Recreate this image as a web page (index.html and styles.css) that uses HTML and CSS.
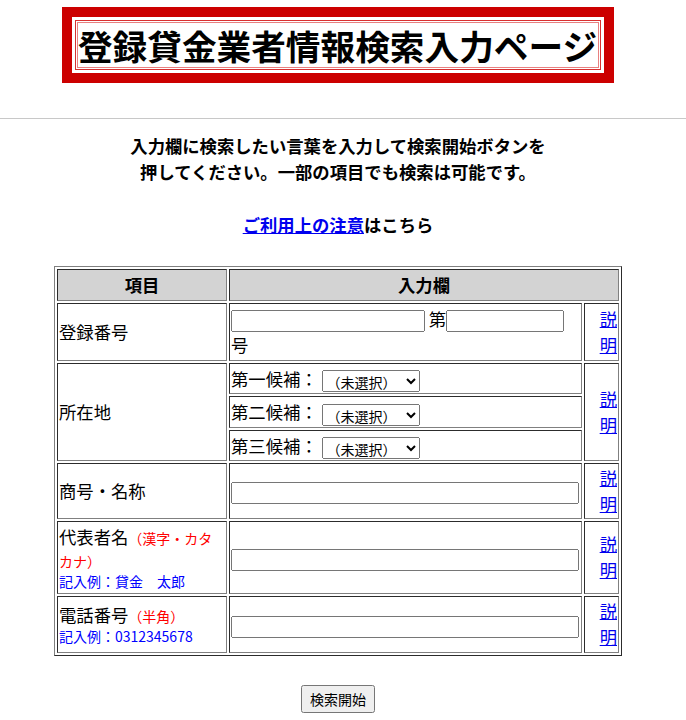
FILE: index.html
```html
<!DOCTYPE html>
<html lang="ja">
<head>
<meta charset="utf-8">
<title>登録貸金業者情報検索入力ページ</title>
<link rel="stylesheet" href="styles.css">
</head>
<body>
<div class="page">
  <div class="title-box">
    <div class="title-inner">
      <h1 class="title-text">登録貸金業者情報検索入力ページ</h1>
    </div>
  </div>
</div>
<hr class="rule">
<div class="page">
  <p class="lead">入力欄に検索したい言葉を入力して検索開始ボタンを<br>押してください。一部の項目でも検索は可能です。</p>
  <p class="notice"><a href="#" class="link">ご利用上の注意</a>はこちら</p>
  <form class="search-form">
    <table class="search-table">
      <colgroup>
        <col class="c1"><col class="c2"><col class="c3">
      </colgroup>
      <tr>
        <th class="head">項目</th>
        <th class="head" colspan="2">入力欄</th>
      </tr>
      <tr>
        <td class="label tall">登録番号</td>
        <td class="field"><input type="text" class="in-reg1"> 第<input type="text" class="in-reg2"><br>号</td>
        <td class="help"><a href="#" class="link">説明</a></td>
      </tr>
      <tr>
        <td class="label" rowspan="3">所在地</td>
        <td class="field sub">第一候補： <select class="sel"><option>（未選択）</option></select></td>
        <td class="help" rowspan="3"><a href="#" class="link">説明</a></td>
      </tr>
      <tr>
        <td class="field sub">第二候補： <select class="sel"><option>（未選択）</option></select></td>
      </tr>
      <tr>
        <td class="field sub">第三候補： <select class="sel"><option>（未選択）</option></select></td>
      </tr>
      <tr>
        <td class="label mid">商号・名称</td>
        <td class="field"><input type="text" class="in-long"></td>
        <td class="help"><a href="#" class="link">説明</a></td>
      </tr>
      <tr>
        <td class="label"><span class="name-line">代表者名<span class="red">（漢字・カタ</span><br><span class="red">カナ）</span></span><span class="eg">記入例：貸金　太郎</span></td>
        <td class="field"><input type="text" class="in-long"></td>
        <td class="help"><a href="#" class="link">説明</a></td>
      </tr>
      <tr>
        <td class="label phone"><span class="name-line">電話番号<span class="red">（半角）</span></span><span class="eg">記入例：0312345678</span></td>
        <td class="field"><input type="text" class="in-long"></td>
        <td class="help"><a href="#" class="link">説明</a></td>
      </tr>
    </table>
    <div class="actions"><button type="button" class="submit">検索開始</button></div>
  </form>
</div>
</body>
</html>
```

FILE: styles.css
```css
html, body {
  margin: 0;
  padding: 0;
  background: #fff;
}
body {
  font-family: "Noto Sans CJK JP", "Noto Sans", sans-serif;
  color: #000;
  font-size: 17.33px;
}
.page {
  width: 676px;
}
.title-box {
  width: fit-content;
  margin: 7px auto 0;
  border: 10px solid #cc0000;
  padding: 3px;
}
.title-inner {
  border: 1px solid #d83030;
  padding: 1px;
}
.title-text {
  margin: 0;
  border: 1px solid #e88080;
  font-size: 34.67px;
  font-weight: bold;
  line-height: 44px;
  padding: 0 1px 0 0;
  white-space: nowrap;
}
.rule {
  margin: 35px 0 0;
  border: 0;
  border-top: 1px solid #c8c8c8;
  height: 0;
}
.lead {
  margin: 14px 0 0;
  text-align: center;
  font-weight: bold;
  line-height: 26px;
}
.notice {
  margin: 27px 0 0;
  text-align: center;
  font-weight: bold;
  line-height: 26px;
}
.link {
  color: #0000ee;
  text-decoration: underline;
}
.search-form {
  margin: 28px 0 0;
}
.search-table {
  table-layout: fixed;
  width: 567px;
  margin: 0 auto;
  border: 1px outset #808080;
  border-spacing: 2px;
  line-height: 26px;
}
.c1 { width: 170px; }
.c2 { width: 353px; }
.c3 { width: 35px; }
.search-table th,
.search-table td {
  border: 1px inset #808080;
  padding: 1px;
}
.head {
  background: #d3d3d3;
  font-weight: bold;
  height: 28px;
  text-align: center;
}
.label {
  text-align: left;
}
.label.tall {
  height: 54px;
}
.label.mid {
  height: 51px;
}
.label.phone {
  height: 53px;
}
.help {
  text-align: right;
}
.field.sub {
  height: 27px;
  line-height: 27px;
}
.in-reg1 { width: 186px; }
.in-reg2 { width: 110px; }
.in-long { width: 340px; }
input, select, button {
  font-family: "Noto Sans CJK JP", "Noto Sans", sans-serif;
  vertical-align: middle;
}
input {
  font-size: 13.33px;
  height: 16px;
}
.sel {
  width: 98px;
  font-size: 14px;
  height: 22px;
}
.name-line {
  display: block;
  line-height: 23px;
  padding-top: 2px;
}
.red {
  color: #ff0000;
  font-size: 14px;
  line-height: 1;
}
.eg {
  display: block;
  color: #0000ff;
  font-size: 14px;
  line-height: 21px;
}
.actions {
  text-align: center;
  margin-top: 28px;
}
.submit {
  font-size: 14px;
  padding: 2px 7px;
}
```
